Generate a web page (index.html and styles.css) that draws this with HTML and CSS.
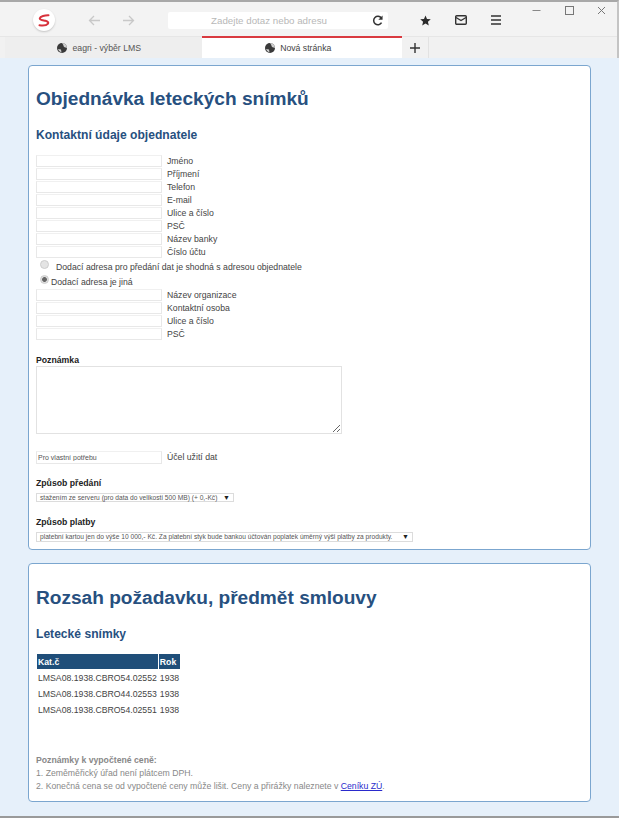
FILE: index.html
```html
<!DOCTYPE html>
<html lang="cs">
<head>
<meta charset="utf-8">
<title>Objednávka leteckých snímků</title>
<link rel="stylesheet" href="styles.css">
</head>
<body>
<header class="chrome">
  <div class="toolbar">
    <div class="logo"><svg width="12" height="13" viewBox="0 0 12 13"><path d="M10.500 1.300C7 1.200 2.300 2.300 1.800 4.300 1.500 6 5 6.200 7.500 6.800 10 7.400 10.800 8.600 9.800 9.900 8.600 11.400 4.500 11.700 1.500 11.300" fill="none" stroke="#d8323c" stroke-width="2" stroke-linecap="round"/></svg></div>
    <svg class="nav back" width="12" height="11" viewBox="0 0 12 11"><path d="M12 5.500H1.500M6 1 1.500 5.500 6 10" fill="none" stroke="#c8c8c8" stroke-width="1.300"/></svg>
    <svg class="nav fwd" width="12" height="11" viewBox="0 0 12 11"><path d="M0 5.500h10.500M6 1l4.500 4.500L6 10" fill="none" stroke="#c8c8c8" stroke-width="1.300"/></svg>
    <div class="urlbar">
      <span class="urltext">Zadejte dotaz nebo adresu</span>
      <svg class="reload" width="11" height="11" viewBox="0 0 13 13"><path d="M11 3.500A5 5 0 1 0 11.300 9" fill="none" stroke="#333" stroke-width="1.800"/><path d="M12.500 0.500v5h-5z" fill="#333"/></svg>
    </div>
    <svg class="tool star" width="11" height="11" viewBox="0 0 24 24"><path d="M12 1l3.300 7.600 8.200.7-6.200 5.400 1.900 8L12 18.500 4.800 22.700l1.900-8L.5 9.300l8.200-.7z" fill="#2a2a2a"/></svg>
    <svg class="tool mail" width="12" height="10" viewBox="0 0 12 10"><rect x="0.700" y="0.700" width="10.600" height="8.600" rx="1" fill="none" stroke="#333" stroke-width="1.400"/><path d="M1 2.500 6 5.500l5-3" fill="none" stroke="#333" stroke-width="1.400"/></svg>
    <svg class="tool menu" width="10" height="10" viewBox="0 0 10 10"><path d="M0 1h10M0 5h10M0 9h10" stroke="#333" stroke-width="1.400"/></svg>
    <div class="winctl">
      <svg width="9" height="9" viewBox="0 0 9 9"><path d="M0.500 4.500h8" stroke="#888" stroke-width="1"/></svg>
      <svg width="9" height="9" viewBox="0 0 9 9"><rect x="0.500" y="0.500" width="8" height="8" fill="none" stroke="#777"/></svg>
      <svg width="9" height="9" viewBox="0 0 9 9"><path d="M1 1l7 7M8 1 1 8" stroke="#777"/></svg>
    </div>
  </div>
  <div class="tabs">
    <div class="tab">
      <svg class="globe" width="10" height="10" viewBox="0 0 10 10"><circle cx="5" cy="5" r="5" fill="#3a3a3a"/><path d="M5 0a5 5 0 0 1 5 5L7 4 6 1.500zM1 6l3 .5.500 3A5 5 0 0 1 1 6z" fill="#cfcfcf"/></svg>
      <span>eagri - výběr LMS</span>
    </div>
    <div class="tab active">
      <svg class="globe" width="10" height="10" viewBox="0 0 10 10"><circle cx="5" cy="5" r="5" fill="#3a3a3a"/><path d="M5 0a5 5 0 0 1 5 5L7 4 6 1.500zM1 6l3 .5.500 3A5 5 0 0 1 1 6z" fill="#cfcfcf"/></svg>
      <span>Nová stránka</span>
    </div>
    <div class="newtab"><svg width="10" height="10" viewBox="0 0 10 10"><path d="M5 0v10M0 5h10" stroke="#333" stroke-width="1.400"/></svg></div>
  </div>
</header>
<main class="page">
  <section class="panel first">
    <h1>Objednávka leteckých snímků</h1>
    <h2 class="contact">Kontaktní údaje objednatele</h2>
    <div class="fields">
      <label class="field"><input type="text"><span>Jméno</span></label>
      <label class="field"><input type="text"><span>Příjmení</span></label>
      <label class="field"><input type="text"><span>Telefon</span></label>
      <label class="field"><input type="text"><span>E-mail</span></label>
      <label class="field"><input type="text"><span>Ulice a číslo</span></label>
      <label class="field"><input type="text"><span>PSČ</span></label>
      <label class="field"><input type="text"><span>Název banky</span></label>
      <label class="field"><input type="text"><span>Číslo účtu</span></label>
    </div>
    <label class="radio same"><input type="radio" name="addr"><span>Dodací adresa pro předání dat je shodná s adresou objednatele</span></label>
    <label class="radio other"><input type="radio" name="addr" checked><span>Dodací adresa je jiná</span></label>
    <div class="fields">
      <label class="field"><input type="text"><span>Název organizace</span></label>
      <label class="field"><input type="text"><span>Kontaktní osoba</span></label>
      <label class="field"><input type="text"><span>Ulice a číslo</span></label>
      <label class="field"><input type="text"><span>PSČ</span></label>
    </div>
    <h4 class="note-title">Poznámka</h4>
    <textarea class="note"></textarea>
    <label class="field purpose"><input type="text" value="Pro vlastní potřebu"><span>Účel užití dat</span></label>
    <h4 class="pick-title">Způsob předání</h4>
    <div class="select s1"><span>stažením ze serveru (pro data do velikosti 500 MB) (+ 0,-Kč)</span><i>▼</i></div>
    <h4 class="pay-title">Způsob platby</h4>
    <div class="select s2"><span>platební kartou jen do výše 10 000,- Kč. Za platební styk bude bankou účtován poplatek úměrný výši platby za produkty.</span><i>▼</i></div>
  </section>
  <section class="panel second">
    <h1>Rozsah požadavku, předmět smlouvy</h1>
    <h2 class="photos">Letecké snímky</h2>
    <table>
      <thead><tr><th>Kat.č</th><th>Rok</th></tr></thead>
      <tbody>
        <tr><td>LMSA08.1938.CBRO54.02552</td><td>1938</td></tr>
        <tr><td>LMSA08.1938.CBRO44.02553</td><td>1938</td></tr>
        <tr><td>LMSA08.1938.CBRO54.02551</td><td>1938</td></tr>
      </tbody>
    </table>
    <div class="remarks">
      <strong>Poznámky k vypočtené ceně:</strong>
      <p>1. Zeměměřický úřad není plátcem DPH.</p>
      <p>2. Konečná cena se od vypočtené ceny může lišit. Ceny a přirážky naleznete v <a href="#">Ceníku ZÚ</a>.</p>
    </div>
  </section>
</main>
</body>
</html>
```
FILE: styles.css
```css
* { box-sizing: border-box; }
html, body { margin: 0; height: 818px; overflow: hidden; }
body { font-family: "Liberation Sans", Arial, sans-serif; color: #333; background: #e6f0fa; border-bottom: 2px solid #9a9a9a; }
.chrome { background: #f3f3f3; border-top: 2px solid #a8a8a8; border-right: 2px solid #c4c4c4; height: 58px; }
.toolbar { height: 34px; display: flex; align-items: center; position: relative; padding: 2px 0 0 33px; }
.logo { width: 22px; height: 22px; border-radius: 50%; background: #fff; box-shadow: 0 1px 2px #c4c4c4; display: flex; align-items: center; justify-content: center; }
.nav.back { margin-left: 33px; }
.nav.fwd { margin-left: 23px; }
.urlbar { margin-left: 33px; width: 220px; height: 17px; background: #fff; border-radius: 2px; display: flex; align-items: center; justify-content: space-between; padding: 0 5px 0 43px; }
.urltext { font-size: 9.750px; color: #b8b8b8; white-space: nowrap; }
.tool.star { margin-left: 32px; }
.tool.mail { margin-left: 24px; }
.tool.menu { margin-left: 24px; }
.winctl { position: absolute; right: 11px; top: 4px; display: flex; gap: 23.400px; }
.tabs { height: 22px; display: flex; align-items: stretch; background: #f1f1f1; border-top: 1px solid #e6e6e6; padding-left: 5px; }
.tab { width: 197px; display: flex; align-items: center; justify-content: center; gap: 5.500px; font-size: 8.700px; color: #555; background: #eee; padding-right: 9px; }
.tab.active { background: #fff; border-top: 2px solid #d93a40; width: 200px; margin-top: -1px; color: #444; padding-right: 8px; }
.newtab { width: 27px; display: flex; align-items: center; justify-content: center; border-right: 1px solid #e2e2e2; }
.page { padding: 7px 28px 0 28px; }
.panel { background: #fff; border: 1px solid #7ba6cf; border-radius: 4px; padding: 0 7px; }
.panel.first { height: 485px; margin-bottom: 13px; }
.panel.second { height: 239px; }
h1 { margin: 0; color: #27507f; font-size: 19.100px; font-weight: bold; line-height: 24px; padding-top: 21px; }
.second h1 { padding-top: 22px; }
h2 { margin: 0; color: #27507f; font-size: 12.100px; font-weight: bold; line-height: 16px; }
.contact { padding-top: 16px; margin-bottom: 11px; }
.photos { margin-top: 16px; margin-bottom: 11px; }
.fields { display: flex; flex-direction: column; }
.field { display: flex; align-items: center; height: 13px; font-size: 8.700px; color: #444; }
.field input { width: 126px; height: 12px; padding: 0 1px; margin: 0 5px 0 0; border: 1px solid #e8e8e8; border-top-color: #f0f0f0; background: #fff; font: 7px "Liberation Sans", Arial, sans-serif; color: #555; outline: none; }
.radio { display: flex; align-items: center; font-size: 8.700px; color: #444; }
.radio input { appearance: none; margin: 0 0 5px; width: 9px; height: 9px; border-radius: 50%; border: 1px solid #cdcdcd; background: #e4e4e4; }
.radio input:checked { background: radial-gradient(circle, #666 0 2px, #dedede 2.800px); }
.radio.same { height: 17px; padding-left: 4px; }
.radio.same input { margin-right: 7px; }
.radio.other { height: 13px; padding-left: 4px; }
.radio.other input { margin-right: 2px; margin-bottom: 4px; }
h4 { margin: 0; font-size: 8.700px; font-weight: bold; color: #222; line-height: 11px; }
.note-title { margin-top: 15px; }
.note { display: block; width: 306px; height: 68px; margin: 0; border: 1px solid #e2e2e2; background: #fff; }
.field.purpose { height: 16px; margin-top: 15px; }
.field.purpose input { height: 13px; }
.pick-title { margin-top: 12.500px; }
.select { display: flex; align-items: center; justify-content: space-between; height: 9.500px; margin-top: 4px; border: 1px solid #dcdcdc; font-size: 6.650px; color: #555; padding: 0 3px; white-space: nowrap; background: #fff; }
.select i { font-style: normal; color: #222; font-size: 7px; }
.s1 { width: 198px; }
.s2 { width: 377px; }
.pay-title { margin-top: 15px; }
table { border-collapse: separate; border-spacing: 1px; font-size: 8.700px; color: #444; }
th { background: #1f4e79; color: #fff; text-align: left; height: 15px; padding: 0 1px; font-weight: bold; }
th:last-child { padding-right: 2px; }
td { height: 15px; padding: 0 1px; }
.remarks { margin-top: 36px; font-size: 8.700px; color: #888; line-height: 13px; }
.remarks strong { display: block; }
.remarks p { margin: 0; }
.remarks a { color: #2a2acc; }
```
